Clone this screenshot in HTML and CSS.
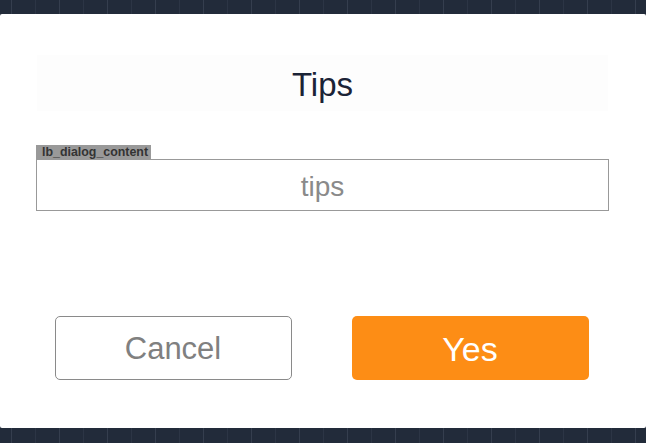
FILE: index.html
```html
<!DOCTYPE html>
<html lang="en">
<head>
<meta charset="utf-8">
<title>Tips</title>
<link rel="stylesheet" href="styles.css">
</head>
<body>
<div class="strip strip-top"></div>
<div class="dialog">
  <div class="title-band"><h1 class="title">Tips</h1></div>
  <div class="field">
    <span class="field-label">lb_dialog_content</span>
    <div class="field-box">tips</div>
  </div>
  <div class="actions">
    <button class="btn btn-cancel">Cancel</button>
    <button class="btn btn-yes">Yes</button>
  </div>
</div>
<div class="strip strip-bottom"></div>
</body>
</html>
```
FILE: styles.css
```css
* { box-sizing: border-box; }
html, body { margin: 0; padding: 0; }
body {
  width: 646px;
  height: 443px;
  overflow: hidden;
  font-family: "Liberation Sans", Arial, sans-serif;
  background: #222b3a;
  display: flex;
  flex-direction: column;
}
.strip {
  background-color: #222b3a;
  background-image:
    repeating-linear-gradient(to right,
      transparent 0, transparent 11px,
      #353e4e 11px, #353e4e 12px,
      transparent 12px, transparent 35px,
      #2c3545 35px, #2c3545 36px,
      transparent 36px, transparent 48px);
}
.strip-top { height: 14px; }
.strip-bottom { flex: 1; }
.dialog {
  height: 414px;
  background: #ffffff;
  border-radius: 2px;
  padding: 41px 37px 0 36px;
  display: flex;
  flex-direction: column;
}
.title-band {
  margin-left: 1px;
  margin-right: 1px;
  height: 56px;
  background: #fdfdfd;
  display: flex;
  align-items: center;
  justify-content: center;
}
.title {
  margin: 0;
  font-weight: normal;
  font-size: 33px;
  color: #1b2336;
  line-height: 1;
  padding-top: 3px;
}
.field {
  margin-top: 34px;
  display: flex;
  flex-direction: column;
  align-items: flex-start;
}
.field-label {
  background: #999999;
  color: #333333;
  font-size: 12.4px;
  font-weight: bold;
  line-height: 14px;
  height: 14px;
  padding: 0 3px 0 6px;
  width: 115px;
  white-space: nowrap;
  overflow: hidden;
}
.field-box {
  align-self: stretch;
  height: 52px;
  border: 1px solid #999999;
  color: #8a8a8a;
  font-size: 28px;
  display: flex;
  align-items: center;
  justify-content: center;
  padding-top: 4px;
}
.actions {
  margin-top: 105px;
  display: flex;
  justify-content: center;
  gap: 60px;
  padding-right: 2px;
}
.btn {
  width: 237px;
  height: 64px;
  border-radius: 5px;
  font-family: "Liberation Sans", Arial, sans-serif;
  cursor: pointer;
  padding: 0;
}
.btn-cancel {
  background: #ffffff;
  border: 1px solid #8a8a8a;
  color: #808080;
  font-size: 31px;
  padding-top: 2px;
}
.btn-yes {
  background: #fd8d15;
  border: none;
  color: #ffffff;
  font-size: 34px;
  padding-top: 2px;
}
```
